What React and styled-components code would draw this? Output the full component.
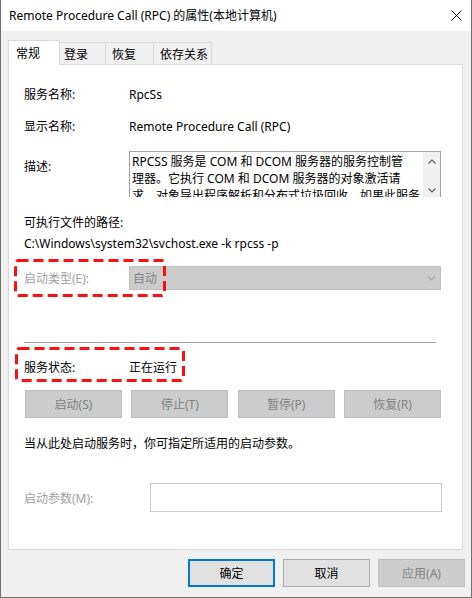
import React from "react";
import styled, { createGlobalStyle } from "styled-components";

const GlobalStyle = createGlobalStyle`
  html, body {
    margin: 0;
    padding: 0;
    background: #ffffff;
  }
  body {
    font-family: "Noto Sans", "Noto Sans CJK SC", sans-serif;
    font-size: 12px;
    color: #000;
  }
  * {
    box-sizing: border-box;
  }
`;

const Window = styled.div`
  width: 472px;
  height: 598px;
  display: flex;
  flex-direction: column;
  background: #f0f0f0;
  border: 1px solid #6f6f6f;
  border-top: none;
`;

const TitleBar = styled.div`
  height: 31px;
  flex: none;
  display: flex;
  align-items: center;
  justify-content: space-between;
  padding: 0 9px 1px 8px;
  background: #ffffff;
  white-space: nowrap;
`;

const CloseIcon = styled.svg`
  display: block;
  margin-top: 1px;
`;

const Body = styled.div`
  flex: 1;
  display: flex;
  flex-direction: column;
  padding: 9px 8px 0 7px;
`;

const TabStrip = styled.div`
  display: flex;
  align-items: flex-start;
  height: 25px;
  margin-bottom: -1px;
  position: relative;
  z-index: 1;
`;

const Tab = styled.div`
  width: ${({ $w }) => $w}px;
  height: ${({ $active }) => ($active ? 25 : 22)}px;
  margin-top: ${({ $active }) => ($active ? 0 : 2)}px;
  margin-left: ${({ $first }) => ($first ? 0 : -1)}px;
  padding-left: ${({ $pl }) => $pl}px;
  display: flex;
  align-items: center;
  padding-bottom: ${({ $active }) => ($active ? 1 : 0)}px;
  background: ${({ $active }) => ($active ? "#ffffff" : "#f0f0f0")};
  border: 1px solid #d9d9d9;
  border-bottom: none;
  white-space: nowrap;
`;

const Panel = styled.div`
  width: 455px;
  height: 486px;
  background: #ffffff;
  border: 1px solid #d9d9d9;
  padding: 0 21px 0 15px;
  display: flex;
  flex-direction: column;
`;

const Row = styled.div`
  position: relative;
  display: flex;
  align-items: ${({ $top }) => ($top ? "flex-start" : "center")};
  height: ${({ $h }) => $h || 20}px;
  margin-top: ${({ $mt }) => $mt}px;
  white-space: nowrap;
`;

const Label = styled.div`
  width: ${({ $w }) => $w || 105}px;
  flex: none;
  color: ${({ $disabled }) => ($disabled ? "#a0a0a0" : "#000")};
  padding-top: ${({ $pt }) => $pt || 0}px;
`;

const Value = styled.div`
  color: #000;
`;

const DescBox = styled.div`
  flex: 1;
  height: 46px;
  display: flex;
  border: 1px solid #a3a3a3;
  border-bottom: none;
  overflow: hidden;
`;

const DescText = styled.div`
  flex: 1;
  padding: 1px 0 0 2px;
  line-height: 17px;
  overflow: hidden;
`;

const DescLine = styled.div`
  white-space: nowrap;
`;

const ScrollBar = styled.div`
  width: 17px;
  flex: none;
  background: #f0f0f0;
  display: flex;
  flex-direction: column;
  justify-content: space-between;
  align-items: center;
  padding: 7px 0 4px;
`;

const ComboBox = styled.div`
  flex: 1;
  height: 24px;
  display: flex;
  align-items: center;
  justify-content: space-between;
  padding: 0 4px 0 3px;
  background: #cccccc;
  border: 1px solid #bfbfbf;
  color: #838383;
`;

const Separator = styled.div`
  width: 412px;
  height: 1px;
  flex: none;
  background: #a0a0a0;
  margin-top: ${({ $mt }) => $mt}px;
`;

const ButtonRow = styled.div`
  display: flex;
  justify-content: space-between;
  margin-top: ${({ $mt }) => $mt}px;
  margin-left: 1px;
`;

const ServiceButton = styled.div`
  width: 97px;
  height: 28px;
  display: flex;
  align-items: center;
  justify-content: center;
  background: #cccccc;
  border: 1px solid #bfbfbf;
  color: #838383;
  white-space: nowrap;
`;

const TextInput = styled.div`
  flex: 1;
  height: 29px;
  margin-right: -1px;
  background: #ffffff;
  border: 1px solid #cccccc;
`;

const Highlight = styled.svg`
  position: absolute;
  left: ${({ $x }) => $x}px;
  top: ${({ $y }) => $y}px;
  pointer-events: none;
`;

const Footer = styled.div`
  display: flex;
  justify-content: flex-end;
  gap: 8px;
  margin-top: 9px;
  margin-right: -2px;
`;

const DialogButton = styled.div`
  width: 87px;
  height: 28px;
  display: flex;
  align-items: center;
  justify-content: center;
  white-space: nowrap;
  background: ${({ $disabled }) => ($disabled ? "#cccccc" : "#e1e1e1")};
  color: ${({ $disabled }) => ($disabled ? "#838383" : "#000")};
  border: ${({ $default, $disabled }) =>
    $default ? "2px solid #0078d7" : $disabled ? "1px solid #bfbfbf" : "1px solid #adadad"};
`;

const Chevron = ({ up, color = "#606060", w = 8 }) => (
  <svg width={w} height="5" viewBox="0 0 8 5">
    <path
      d={up ? "M0.5 4.5 L4 1 L7.5 4.5" : "M0.5 0.5 L4 4 L7.5 0.5"}
      fill="none"
      stroke={color}
      strokeWidth="1.2"
    />
  </svg>
);

const RedBox = ({ x, y, w, h }) => (
  <Highlight $x={x} $y={y} width={w} height={h}>
    <rect
      x="1.5"
      y="1.5"
      width={w - 3}
      height={h - 3}
      rx="3"
      fill="none"
      stroke="#ff1010"
      strokeWidth="3"
      strokeDasharray="10 5"
    />
  </Highlight>
);

const tabs = [
  { label: "常规", w: 52, pl: 7, active: true },
  { label: "登录", w: 47, pl: 4 },
  { label: "恢复", w: 49, pl: 6 },
  { label: "依存关系", w: 59, pl: 6 },
];

const actions = ["启动(S)", "停止(T)", "暂停(P)", "恢复(R)"];

export default function App() {
  return (
    <>
      <GlobalStyle />
      <Window>
        <TitleBar>
          <span>Remote Procedure Call (RPC) 的属性(本地计算机)</span>
          <CloseIcon width="11" height="11" viewBox="0 0 11 11">
            <path d="M0.5 0.5 L10.5 10.5 M10.5 0.5 L0.5 10.5" stroke="#000" strokeWidth="1" />
          </CloseIcon>
        </TitleBar>
        <Body>
          <TabStrip>
            {tabs.map((t, i) => (
              <Tab key={t.label} $w={t.w} $pl={t.pl} $active={t.active} $first={i === 0}>
                {t.label}
              </Tab>
            ))}
          </TabStrip>
          <Panel>
            <Row $mt={19}>
              <Label>服务名称:</Label>
              <Value>RpcSs</Value>
            </Row>
            <Row $mt={12}>
              <Label>显示名称:</Label>
              <Value>Remote Procedure Call (RPC)</Value>
            </Row>
            <Row $mt={15} $h={46} $top>
              <Label $pt={6}>描述:</Label>
              <DescBox>
                <DescText>
                  <DescLine>RPCSS 服务是 COM 和 DCOM 服务器的服务控制管</DescLine>
                  <DescLine>理器。它执行 COM 和 DCOM 服务器的对象激活请</DescLine>
                  <DescLine>求、对象导出程序解析和分布式垃圾回收。如果此服务</DescLine>
                </DescText>
                <ScrollBar>
                  <Chevron up />
                  <Chevron />
                </ScrollBar>
              </DescBox>
            </Row>
            <Row $mt={15}>
              <Label $w={200}>可执行文件的路径:</Label>
            </Row>
            <Row $mt={1}>
              <Value>C:\Windows\system32\svchost.exe -k rpcss -p</Value>
            </Row>
            <Row $mt={13} $h={24}>
              <Label $disabled>启动类型(E):</Label>
              <ComboBox>
                <span>自动</span>
                <Chevron color="#a6a6a6" w={9} />
              </ComboBox>
              <RedBox x={-10} y={-7} w={152} h={38} />
            </Row>
            <Separator $mt={52} />
            <Row $mt={14}>
              <Label>服务状态:</Label>
              <Value>正在运行</Value>
              <RedBox x={-9} y={-10} w={170} h={35} />
            </Row>
            <ButtonRow $mt={13}>
              {actions.map((a) => (
                <ServiceButton key={a}>{a}</ServiceButton>
              ))}
            </ButtonRow>
            <Row $mt={15}>
              <Value>当从此处启动服务时，你可指定所适用的启动参数。</Value>
            </Row>
            <Row $mt={30} $h={29}>
              <Label $w={126} $disabled>启动参数(M):</Label>
              <TextInput />
            </Row>
          </Panel>
          <Footer>
            <DialogButton $default>确定</DialogButton>
            <DialogButton>取消</DialogButton>
            <DialogButton $disabled>应用(A)</DialogButton>
          </Footer>
        </Body>
      </Window>
    </>
  );
}
